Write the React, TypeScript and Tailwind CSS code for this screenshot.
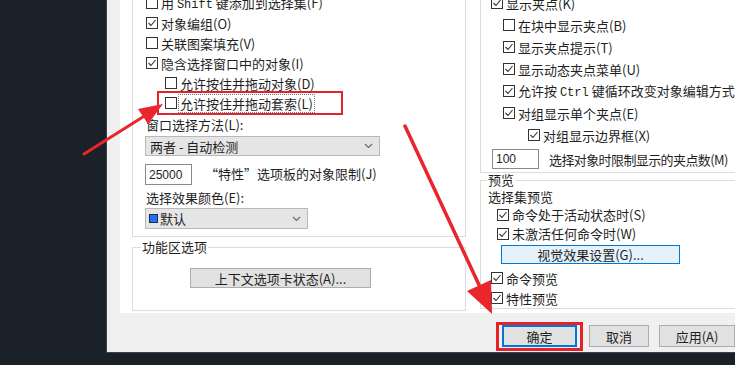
import React from "react";

const mono = "font-['Liberation_Mono',monospace] text-[12px]";

function Check({ on }: { on?: boolean }) {
  return (
    <span className="flex h-3 w-3 shrink-0 items-center justify-center border border-[#333] bg-white">
      {on && (
        <svg width="10" height="10" viewBox="0 0 10 10">
          <path d="M1.5 5 L4 7.5 L8.5 2" stroke="#333" strokeWidth="1.1" fill="none" />
        </svg>
      )}
    </span>
  );
}

function Row({
  on,
  children,
  className = "",
}: {
  on?: boolean;
  children: React.ReactNode;
  className?: string;
}) {
  return (
    <div className={`flex items-center gap-[3px] whitespace-nowrap ${className}`}>
      <Check on={on} />
      <span>{children}</span>
    </div>
  );
}

function Chevron() {
  return (
    <svg width="9" height="6" viewBox="0 0 9 6">
      <path d="M1 1 L4.5 4.5 L8 1" stroke="#666" strokeWidth="1.1" fill="none" />
    </svg>
  );
}

export default function App() {
  return (
    <div className="relative h-[365px] w-[735px] overflow-hidden bg-[#1b2129] font-['Noto_Sans_CJK_SC',sans-serif] text-[13px] leading-none text-[#1f1f1f]">
      <div className="flex h-[353px]">
        <div className="w-[106px] shrink-0" />
        <div className="flex w-[629px] shrink-0 flex-col border-b border-l border-[#3d4249] bg-[#f0f0f0]">
          {/* tab page */}
          <div className="ml-[13px] flex h-[313px] bg-white">
            {/* left column */}
            <div className="w-[360px] shrink-0">
              <div className="ml-[12px] w-[334px] border-x border-b border-[#dcdcdc] pb-[7px] pl-[13px]">
                <Row className="-mt-[7px] h-5">
                  用 <span className={mono}>Shift</span> 键添加到选择集(F)
                </Row>
                <Row on className="h-5">对象编组(O)</Row>
                <Row className="h-5">关联图案填充(V)</Row>
                <Row on className="h-5">隐含选择窗口中的对象(I)</Row>
                <Row className="ml-[19px] h-5">允许按住并拖动对象(D)</Row>
                <div className="-mt-[2px] ml-[11px] flex h-[24px] w-[186px] items-center gap-[1px] border-2 border-[#e3222b] pl-[6px]">
                  <Check />
                  <span className="border border-dotted border-[#777] px-[1px] py-[2px]">允许按住并拖动套索(L)</span>
                </div>
                <div className="-mt-[1px] flex h-5 items-center">窗口选择方法(L):</div>
                <div className="-ml-[1px] mt-[2px] flex h-5 w-[235px] items-center justify-between border border-[#b9b9b9] bg-[#e5e5e5] pl-[4px] pr-[6px]">
                  <span>两者 - 自动检测</span>
                  <Chevron />
                </div>
                <div className="-ml-[1px] mt-[8px] flex items-center">
                  <div className="flex h-[21px] w-[47px] items-center border border-[#8a8a8a] bg-white pl-[3px] font-['Liberation_Sans',sans-serif] text-[12px]">
                    25000
                  </div>
                  <span className="ml-[13px] -mt-[3px]">“特性”选项板的对象限制(J)</span>
                </div>
                <div className="mt-[2px] flex h-5 items-center">选择效果颜色(E):</div>
                <div className="-ml-[1px] mt-[1px] flex h-[21px] w-[163px] items-center justify-between border border-[#b9b9b9] bg-[#e5e5e5] pl-[3px] pr-[6px]">
                  <span className="flex items-center gap-[2px]">
                    <span className="h-[9px] w-[9px] border border-[#1a2a55] bg-[#2271f0]" />
                    默认
                  </span>
                  <Chevron />
                </div>
              </div>
              <fieldset className="ml-[12px] w-[334px] border border-[#dcdcdc] pb-[22px]">
                <legend className="ml-[8px] px-[1px] leading-5">功能区选项</legend>
                <div className="ml-[57px] mt-[11px] flex h-5 w-[181px] items-center justify-center border border-[#adadad] bg-[#e1e1e1]">
                  上下文选项卡状态(A)...
                </div>
              </fieldset>
            </div>

            {/* right column */}
            <div className="flex-1 overflow-hidden">
              <div className="w-[300px] border-b border-l border-[#dcdcdc] pb-[3px] pl-[10px]">
                <Row on className="-mt-[8px] h-[22px]">显示夹点(K)</Row>
                <Row className="ml-[12px] h-[22px]">在块中显示夹点(B)</Row>
                <Row on className="ml-[12px] h-[22px]">显示夹点提示(T)</Row>
                <Row on className="ml-[12px] h-[22px]">显示动态夹点菜单(U)</Row>
                <Row on className="ml-[12px] h-[22px]">
                  允许按 <span className={mono}>Ctrl</span> 键循环改变对象编辑方式行为(I)
                </Row>
                <Row on className="ml-[12px] h-[22px]">对组显示单个夹点(E)</Row>
                <Row on className="ml-[37px] h-[22px]">对组显示边界框(X)</Row>
                <div className="ml-[1px] mt-[3px] flex items-center whitespace-nowrap">
                  <div className="flex h-5 w-[47px] items-center border border-[#8a8a8a] bg-white pl-[3px] font-['Liberation_Sans',sans-serif] text-[12px]">
                    100
                  </div>
                  <span className="ml-[10px] tracking-[-0.6px]">选择对象时限制显示的夹点数(M)</span>
                </div>
              </div>
              <fieldset className="w-[300px] border border-[#dcdcdc]">
                <legend className="ml-[6px] px-[1px] leading-[14px]">预览</legend>
                <div className="mt-[1px] flex h-[17px] items-center pl-[7px]">选择集预览</div>
                <Row on className="ml-[16px] h-[19px]">命令处于活动状态时(S)</Row>
                <Row on className="ml-[16px] h-[19px]">未激活任何命令时(W)</Row>
                <div className="ml-[20px] mt-[2px] flex h-[19px] w-[179px] items-center justify-center border border-[#0078d7] bg-[#e5f1fb]">
                  视觉效果设置(G)...
                </div>
                <Row on className="ml-[10px] mt-[4px] h-5">命令预览</Row>
                <Row on className="ml-[10px] h-5">特性预览</Row>
              </fieldset>
            </div>
          </div>

          {/* dialog buttons */}
          <div className="mt-[9px] flex items-start pl-[389px]">
            <div className="border-[3px] border-[#e3222b] px-[3px] pb-[1px]">
              <div className="flex h-[22px] w-[75px] items-center justify-center border-2 border-[#0078d7] bg-[#e1e1e1]">
                确定
              </div>
            </div>
            <div className="ml-[6px] mt-[3px] flex h-[22px] w-[74px] items-center justify-center border border-[#adadad] bg-[#e1e1e1]">
              取消
            </div>
            <div className="ml-[10px] mt-[3px] flex h-[22px] w-[76px] shrink-0 items-center justify-center border border-[#adadad] bg-[#e1e1e1]">
              应用(A)
            </div>
          </div>
        </div>
      </div>

      {/* annotation arrows */}
      <svg className="pointer-events-none absolute left-0 top-0" width="735" height="365">
        <line x1="84" y1="154" x2="146" y2="115" stroke="#e8262b" strokeWidth="3" strokeLinecap="round" />
        <polygon points="163,104 148,124 138,109" fill="#e8262b" />
        <line x1="405" y1="126" x2="480" y2="287" stroke="#e8262b" strokeWidth="3.5" strokeLinecap="round" />
        <polygon points="492,314 491,280 467,291" fill="#e8262b" />
      </svg>
    </div>
  );
}
